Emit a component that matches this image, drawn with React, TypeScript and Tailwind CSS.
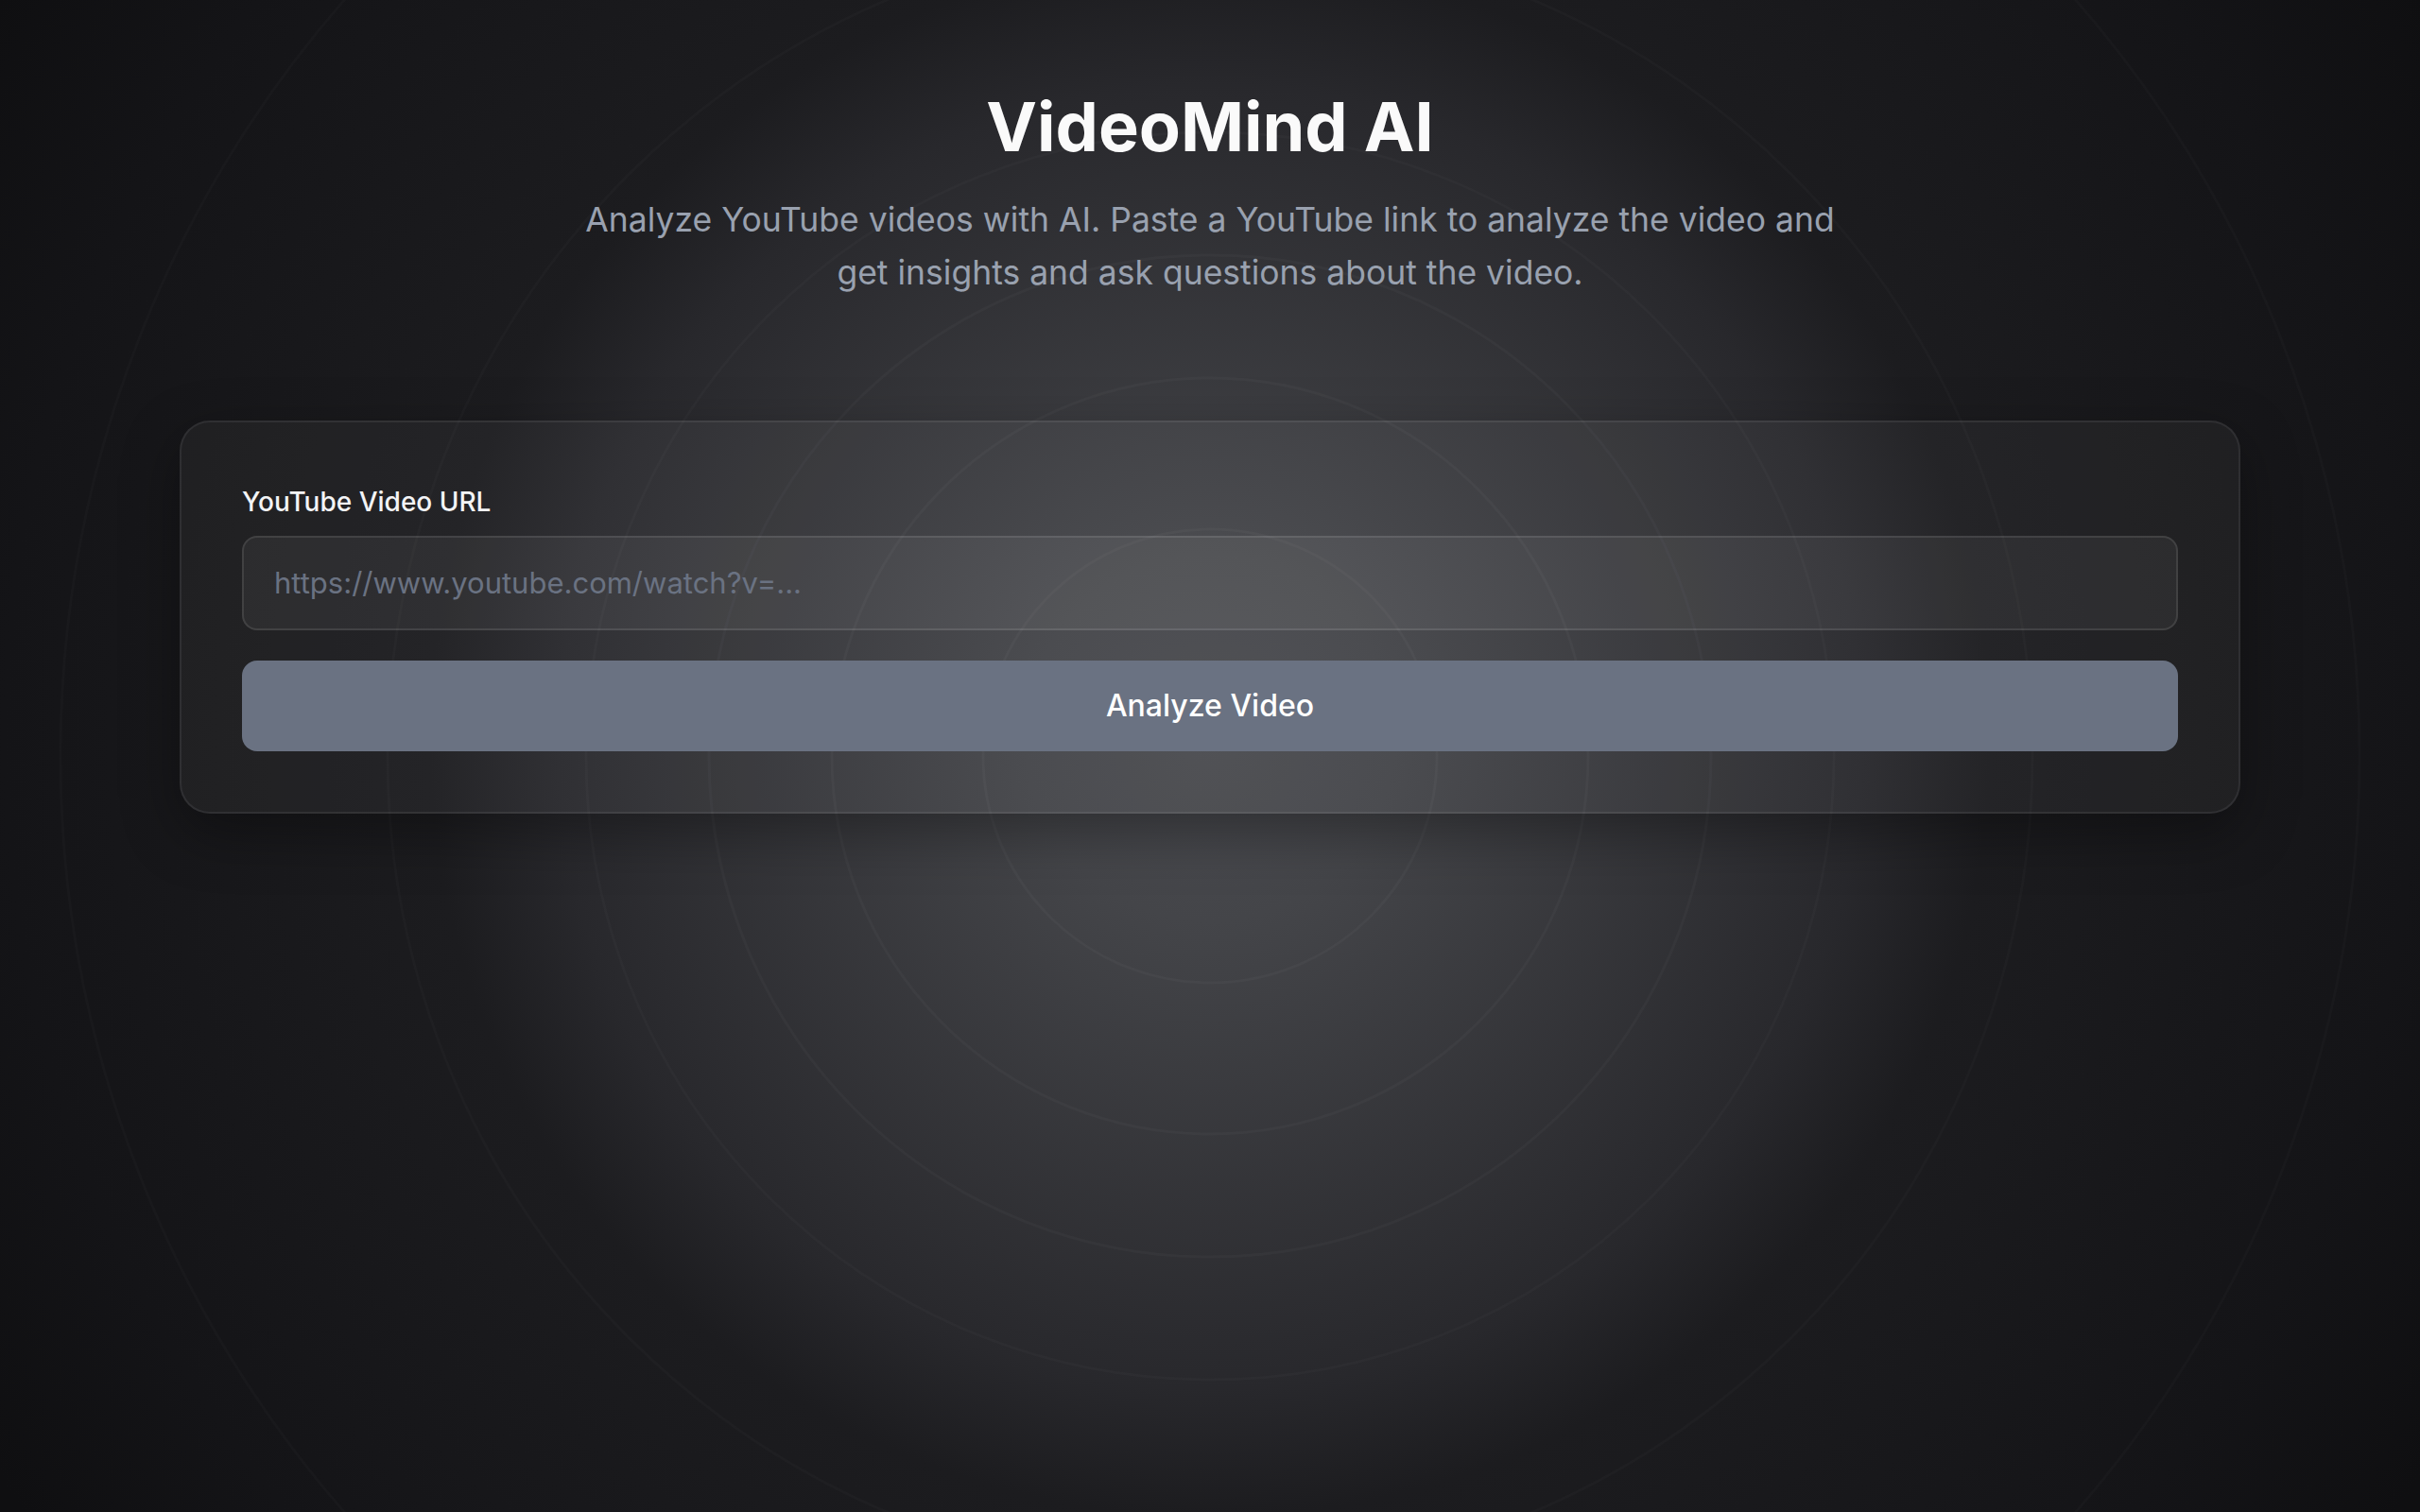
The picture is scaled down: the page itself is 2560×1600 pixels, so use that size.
import { useState } from "react";

// concentric rings drawn faintly behind the page
const RING_RADII = [240, 400, 530, 660, 870, 1216];

const Rings = () => (
  <svg
    className="pointer-events-none absolute inset-0 h-full w-full"
    viewBox="0 0 2560 1600"
    preserveAspectRatio="xMidYMid slice"
    aria-hidden
  >
    {RING_RADII.map((r) => (
      <circle
        key={r}
        cx={1280}
        cy={800}
        r={r}
        fill="none"
        stroke="#ffffff"
        strokeOpacity={r > 600 ? 0.018 : 0.026}
        strokeWidth={3}
      />
    ))}
  </svg>
);

export default function App() {
  const [url, setUrl] = useState("");

  return (
    <div className="relative min-h-screen overflow-hidden bg-[radial-gradient(circle_1500px_at_50%_780px,#4a4b50_0%,#444549_13%,#28282c_46%,#1c1c1f_55%,#141417_85%,#0f0f11_100%)] font-['Inter',sans-serif] text-white">
      <Rings />
      <main className="relative mx-auto flex max-w-[2180px] flex-col items-center pt-[98px]">
        <h1 className="text-7xl font-bold text-neutral-50">VideoMind AI</h1>
        <p className="mt-[35px] max-w-[1344px] text-center text-[35.5px] leading-[56px] text-gray-400">
          Analyze YouTube videos with AI. Paste a YouTube link to analyze the
          video and get insights and ask questions about the video.
        </p>

        <form
          className="mt-[128px] w-full rounded-[32px] border-2 border-white/[0.07] bg-white/[0.04] p-16 shadow-[0_20px_60px_rgba(0,0,0,0.35)]"
          onSubmit={(e) => e.preventDefault()}
        >
          <label
            htmlFor="video-url"
            className="mb-4 block text-[28px] leading-10 font-medium text-gray-100"
          >
            YouTube Video URL
          </label>
          <input
            id="video-url"
            type="text"
            value={url}
            onChange={(e) => setUrl(e.target.value)}
            placeholder="https://www.youtube.com/watch?v=..."
            className="block w-full rounded-2xl border-2 border-white/10 bg-white/[0.05] px-8 py-6 text-[31px] leading-[48px] text-white outline-none placeholder:text-gray-500"
          />
          <button
            type="submit"
            disabled={!url}
            className="mt-8 block w-full rounded-2xl bg-gray-500 py-6 text-[32px] leading-[48px] font-medium text-white"
          >
            Analyze Video
          </button>
        </form>
      </main>
    </div>
  );
}
